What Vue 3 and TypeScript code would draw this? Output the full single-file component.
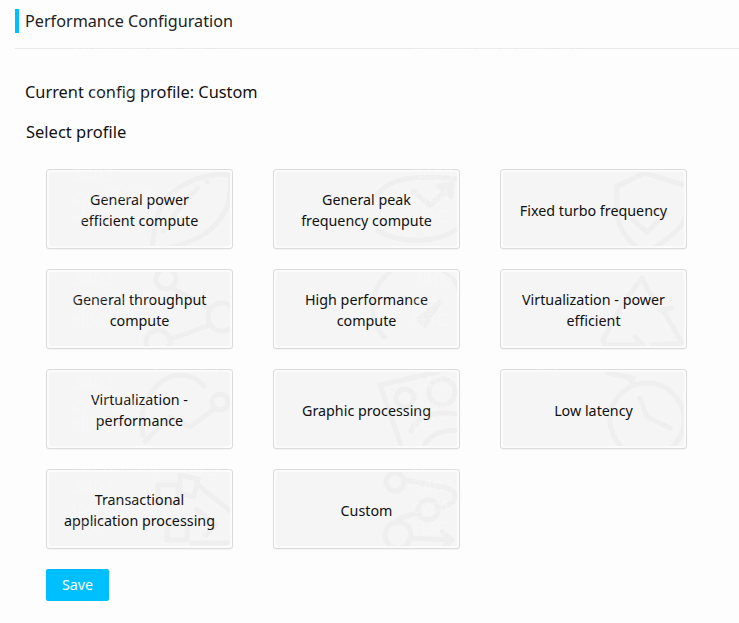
<template>
  <div class="page">
    <div class="title-bar">
      <span class="title">Performance Configuration</span>
    </div>

    <div class="content">
      <div class="current">Current config profile: Custom</div>
      <div class="select-label">Select profile</div>

      <div class="grid">
        <button v-for="p in profiles" :key="p.name" class="card" type="button">
          <span class="card-inner">
            <svg class="card-icon" viewBox="0 0 187 80" fill="none" stroke="#efefef" stroke-width="5" stroke-linecap="round" stroke-linejoin="round">
              <path v-for="(d, i) in p.paths" :key="i" :d="d" />
            </svg>
            <span class="card-text">{{ p.name }}</span>
          </span>
        </button>
      </div>

      <button class="save" type="button">Save</button>
    </div>

    <!-- 水印 -->
    <div class="watermark" aria-hidden="true">
      <div v-for="col in 2" :key="col" class="wm-col">
        <template v-for="n in 6" :key="n">
          <div class="wm-line">H3C</div>
          <div class="wm-line">&nbsp;</div>
          <div class="wm-line">chendongming_ys4</div>
          <div class="wm-line">3403</div>
          <div class="wm-line">cys43403</div>
        </template>
      </div>
    </div>
  </div>
</template>

<script setup lang="ts">
interface Profile {
  name: string
  paths: string[]
}

// 圆环路径
const ring = (cx: number, cy: number, r: number): string =>
  `M${cx - r} ${cy}a${r} ${r} 0 1 0 ${r * 2} 0a${r} ${r} 0 1 0 ${-r * 2} 0Z`

// 坐标以卡片左上角为原点, 每个配置项右侧的浅色背景图标
const profiles: Profile[] = [
  {
    name: 'General power efficient compute',
    paths: [
      'M184 5C150 5 120 20 112 45 108 60 107 70 106 80',
      'M184 5C186 30 182 48 160 64 145 74 130 78 115 80',
      'M161 13L161 13',
      'M152 19C135 35 125 50 117 62'
    ]
  },
  {
    name: 'General peak frequency compute',
    paths: [
      'M104 26C115 10 140 5 185 10',
      'M105 62C125 74 165 76 186 58',
      'M140 22L157 36 176 20',
      'M166 17L179 15 178 28Z'
    ]
  },
  {
    name: 'Fixed turbo frequency',
    paths: ['M145 4L117 17V40C117 60 130 76 145 84 160 76 187 60 187 40V17Z', 'M133 51L147 63 167 44']
  },
  {
    name: 'General throughput compute',
    paths: [ring(120, 10, 10), 'M128 20L165 40', ring(176, 48, 14), 'M164 56L125 70', ring(112, 73, 12)]
  },
  {
    name: 'High performance compute',
    paths: ['M111 68A45 45 0 1 1 188 26', 'M167 33L151 48', 'M165 35L146 50 152 56Z']
  },
  {
    name: 'Virtualization - power efficient',
    paths: [
      'M123 34L142 9 155 34',
      'M160 41L172 39',
      'M163 41L182 74 153 76',
      'M123 34L103 71 105 76H143',
      'M135 68L143 76 135 82'
    ]
  },
  {
    name: 'Virtualization - performance',
    paths: ['M97 66C90 30 115 6 134 6 145 6 152 10 158 17', ring(174, 33, 8), 'M99 72L124 48 144 58 167 41']
  },
  {
    name: 'Graphic processing',
    paths: [
      'M165 3L107 16 130 82',
      ring(132, 29, 9),
      ring(169, 23, 13),
      'M138 62C145 45 165 42 182 45',
      'M150 80C155 65 170 60 185 62'
    ]
  },
  {
    name: 'Low latency',
    paths: [ring(147, 51, 37), 'M108 4L133 9', 'M129 9L135 16', 'M140 29L147 48 170 59']
  },
  {
    name: 'Transactional application processing',
    paths: [
      'M112 16H132V34H112Z',
      'M134 6L152 10 148 28 134 24Z',
      'M152 16L184 42',
      'M121 54H141V71H121Z',
      'M150 40L170 56 160 66',
      'M146 74H184'
    ]
  },
  {
    name: 'Custom',
    paths: [
      ring(122, 13, 9),
      'M132 11L174 19C186 22 186 36 165 39',
      ring(155, 41, 10),
      'M144 44C130 48 122 50 124 54',
      ring(125, 66, 13),
      'M137 69L177 71',
      'M169 63L179 71 169 79'
    ]
  }
]
</script>

<style scoped>
.page {
  position: relative;
  width: 739px;
  height: 623px;
  overflow: hidden;
  background: #fdfdfd;
  color: #111;
  font-family: "Noto Sans", "Open Sans", sans-serif;
}

.title-bar {
  height: 49px;
  margin-left: 15px;
  padding-top: 9px;
  box-sizing: border-box;
  border-bottom: 1px solid #e9e9e9;
}

.title {
  display: block;
  height: 24px;
  padding-left: 6px;
  border-left: 4px solid #00bfff;
  font-size: 16.2px;
  line-height: 24px;
  color: #222;
}

.content {
  padding: 33px 0 0 25px;
}

.current {
  font-size: 16.35px;
  line-height: 20px;
}

.select-label {
  margin: 20px 0 0 1px;
  font-size: 16.5px;
  line-height: 20px;
}

.grid {
  display: grid;
  grid-template-columns: repeat(3, 187px);
  grid-auto-rows: 80px;
  gap: 20px 40px;
  margin: 27px 0 0 21px;
}

.card {
  padding: 2px;
  border: 1px solid #dcdcdc;
  border-radius: 3px;
  background: #fbfbfb;
  box-shadow: 0 1px 1px rgba(0, 0, 0, 0.04);
  font-family: inherit;
  font-size: 14.3px;
  line-height: 21px;
  color: #111;
  text-align: center;
}

.card-inner {
  position: relative;
  display: flex;
  align-items: center;
  justify-content: center;
  height: 100%;
  padding: 2px 13px 0;
  box-sizing: border-box;
  overflow: hidden;
  border-radius: 3px;
  background: #f5f5f5;
}

.card-icon {
  position: absolute;
  left: -3px;
  top: -3px;
  width: 187px;
  height: 80px;
}

.card-text {
  position: relative;
}

.save {
  position: relative;
  z-index: 2;
  display: block;
  width: 63px;
  height: 32px;
  margin: 20px 0 0 21px;
  padding: 0 0 2px;
  border: none;
  border-radius: 2px;
  background: #00bfff;
  color: #fff;
  font-family: inherit;
  font-size: 14.3px;
}

.watermark {
  position: absolute;
  top: -2px;
  left: 72px;
  z-index: 1;
  display: flex;
  pointer-events: none;
}

.wm-col {
  width: 340px;
  font-size: 18px;
  line-height: 20.76px;
  letter-spacing: 0.3px;
  color: rgba(255, 255, 255, 0.25);
  white-space: nowrap;
}
</style>

<style>
body {
  background: #fdfdfd;
}
</style>
